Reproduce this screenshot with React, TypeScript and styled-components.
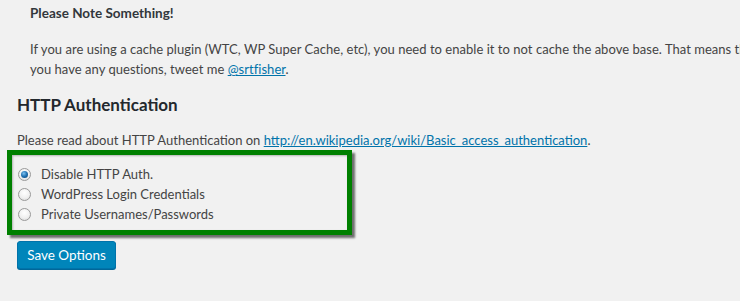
import styled, { createGlobalStyle } from "styled-components";

const GlobalStyle = createGlobalStyle`
  body {
    margin: 0;
    background: #f1f1f1;
    overflow: hidden;
    font-family: Lato, "Noto Sans", Arial, sans-serif;
    font-size: 13px;
    color: #444;
  }
`;

const Page = styled.div`
  width: 740px;
  height: 301px;
  padding-left: 17px;
  box-sizing: border-box;
  overflow: hidden;
`;

const Notice = styled.div`
  margin-left: 13px;
  padding-top: 3px;
`;

const NoticeTitle = styled.div`
  font-weight: 700;
  font-size: 13.5px;
  line-height: 20px;
  color: #32373c;
`;

const Text = styled.p`
  margin: 0;
  line-height: 20px;
  white-space: nowrap;
`;

const NoticeText = styled(Text)`
  margin-top: 16px;
  letter-spacing: 0.03px;
`;

const Heading = styled.h2`
  margin: 14px 0 0;
  font-size: 17px;
  line-height: 24px;
  font-weight: 700;
  color: #23282d;
`;

const Intro = styled(Text)`
  margin-top: 13px;
`;

const A = styled.a`
  color: #0073aa;
  text-decoration: underline;
`;

const Highlight = styled.div`
  width: 345px;
  margin-left: -10px;
  box-sizing: border-box;
  border: 5px solid #008000;
  padding: 9px 0 6px 6px;
  box-shadow: 3px 3px 2px rgba(0, 0, 0, 0.55), inset 1px 1px 2px rgba(0, 0, 0, 0.25);
`;

const Option = styled.label`
  display: flex;
  align-items: center;
  gap: 10px;
  height: 20px;
`;

const Radio = styled.span<{ checked?: boolean }>`
  width: 13px;
  height: 13px;
  border-radius: 50%;
  box-sizing: border-box;
  border: 1px solid #9a9a9a;
  background: radial-gradient(circle at 50% 35%, #ffffff 0%, #f0f0f0 55%, #d6d6d6 100%);
  display: flex;
  align-items: center;
  justify-content: center;
  &::after {
    content: "";
    display: ${(p) => (p.checked ? "block" : "none")};
    width: 7px;
    height: 7px;
    border-radius: 50%;
    background: radial-gradient(circle at 40% 35%, #7ec2f0 0%, #1e6fb0 50%, #0b3f6e 100%);
  }
`;

const Button = styled.button`
  margin-top: 6px;
  width: 99px;
  height: 28px;
  padding: 0;
  border: 1px solid #0073aa;
  border-radius: 3px;
  background: #0085ba;
  box-shadow: 0 1px 0 #006799;
  color: #fff;
  font-family: inherit;
  font-size: 13.5px;
`;

export default function App() {
  return (
    <Page>
      <GlobalStyle />
      <Notice>
        <NoticeTitle>Please Note Something!</NoticeTitle>
        <NoticeText>
          If you are using a cache plugin (WTC, WP Super Cache, etc), you need to enable it to not
          cache the above base. That means that
          <br />
          you have any questions, tweet me <A href="#">@srtfisher</A>.
        </NoticeText>
      </Notice>
      <Heading>HTTP Authentication</Heading>
      <Intro>
        Please read about HTTP Authentication on{" "}
        <A href="#">http://en.wikipedia.org/wiki/Basic_access_authentication</A>.
      </Intro>
      <Highlight>
        <Option>
          <Radio checked />
          Disable HTTP Auth.
        </Option>
        <Option>
          <Radio />
          WordPress Login Credentials
        </Option>
        <Option>
          <Radio />
          Private Usernames/Passwords
        </Option>
      </Highlight>
      <Button>Save Options</Button>
    </Page>
  );
}
